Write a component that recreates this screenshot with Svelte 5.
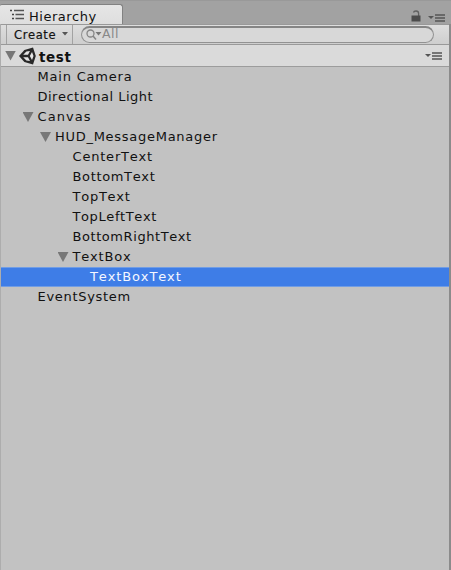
<script>
  const rows = [
    { name: 'Main Camera', depth: 0, ls: 0.8 },
    { name: 'Directional Light', depth: 0, ls: 0.5 },
    { name: 'Canvas', depth: 0, open: true, ls: 1.05 },
    { name: 'HUD_MessageManager', depth: 1, open: true, ls: 0.72 },
    { name: 'CenterText', depth: 2, ls: 0.8 },
    { name: 'BottomText', depth: 2, ls: 0.65 },
    { name: 'TopText', depth: 2, ls: 0.75 },
    { name: 'TopLeftText', depth: 2, ls: 0.6 },
    { name: 'BottomRightText', depth: 2, ls: 0.57 },
    { name: 'TextBox', depth: 2, open: true, ls: 0.8 },
    { name: 'TextBoxText', depth: 3, selected: true, ls: 0.87 },
    { name: 'EventSystem', depth: 0, ls: 0.7 }
  ];
</script>

{#snippet menuIcon()}
  <svg class="menu" width="18" height="8" viewBox="0 0 18 8">
    <path d="M0 2h6L3 5z" fill="#555" />
    <path d="M7 1h10M7 4h10M7 7h10" stroke="#555" stroke-width="1.5" />
  </svg>
{/snippet}

<div class="panel">
  <header>
    <div class="tab">
      <svg width="15" height="12" viewBox="0 0 15 12">
        <path d="M0 1.5h2M2 5.5h2M2 9.5h2" stroke="#444" stroke-width="1.7" />
        <path d="M4 1.5h10M5.5 5.5H14M5.5 9.5H14" stroke="#555" stroke-width="1.5" />
      </svg>
      <span>Hierarchy</span>
    </div>
    <div class="actions">
      <svg width="10" height="12" viewBox="0 0 10 12">
        <path d="M2.5 2.5Q2.8 1 5 1q2.6 0 2.6 2.5V6" fill="none" stroke="#606060" stroke-width="1.3" />
        <rect x="0.5" y="5.5" width="9" height="6" fill="#4c4c4c" />
      </svg>
      {@render menuIcon()}
    </div>
  </header>
  <div class="toolbar">
    <div class="create"><span>Create</span>
      <svg width="6" height="4" viewBox="0 0 6 4"><path d="M0 0h6L3 3.5z" fill="#555" /></svg>
    </div>
    <div class="search">
      <svg width="16" height="12" viewBox="0 0 16 12">
        <circle cx="4.5" cy="4.5" r="3.5" fill="none" stroke="#858585" stroke-width="1.3" />
        <path d="M7 7l3 3.5" stroke="#858585" stroke-width="1.5" />
        <path d="M9.5 3h6l-3 3.5z" fill="#777" />
      </svg>
      <span>All</span>
    </div>
  </div>
  <div class="scene">
    <i class="arrow"></i>
    <svg class="logo" width="18" height="18" viewBox="0 0 18 18">
      <path d="M0 9L5.4 3 14 .5 16.8 9 14 17.5 5.4 15z" fill="#292929" />
      <path d="M4.2 7.8L7.4 4.6l3.6-.7-2 3.9zM4.2 10.2H9l2 3.9-3.6-.7zM10.8 9l2.2-4.1L14.5 9 13 13.1z" fill="#e5e5e5" />
    </svg>
    <b>test</b>
    {@render menuIcon()}
  </div>
  <div class="tree">
    {#each rows as row}
      <div class="row" class:selected={row.selected} style="padding-left: {21.5 + row.depth * 17.5}px">
        <span class="fold">{#if row.open}<i class="arrow"></i>{/if}</span>
        <span style="letter-spacing: {row.ls}px">{row.name}</span>
      </div>
    {/each}
  </div>
</div>

<style>
  .panel {
    box-sizing: border-box;
    width: 451px;
    height: 570px;
    display: flex;
    flex-direction: column;
    background: #c2c2c2;
    border-left: 1px solid #adadad;
    border-right: 2px solid #8b8b8b;
    font: 13px/20px 'DejaVu Sans', sans-serif;
    font-kerning: none;
    color: #111;
  }
  svg { display: block; flex: none; }
  span, b { white-space: pre; }
  header {
    height: 24px;
    flex: none;
    display: flex;
    justify-content: space-between;
    align-items: flex-end;
    background: #a2a2a2;
    margin: 0 -2px 0 -1px;
    box-shadow: inset 0 1px #999;
  }
  .tab {
    box-sizing: border-box;
    width: 123px;
    height: 20px;
    display: flex;
    align-items: center;
    gap: 4px;
    padding-left: 10px;
    background: linear-gradient(#e6e6e6, #dedede);
    border: 1px solid #828282;
    border-bottom: 0;
    border-left: 0;
    border-radius: 2px 3px 0 0;
    font-size: 13px;
    letter-spacing: 0.5px;
  }
  .tab span { margin-top: 4px; }
  .actions { display: flex; align-items: flex-end; gap: 7px; padding: 0 5px 2px 0; }
  .toolbar {
    box-sizing: border-box;
    height: 21px;
    flex: none;
    display: flex;
    padding-left: 5px;
    background: linear-gradient(#dedede, #cecece);
    border-top: 1px solid #999;
    border-bottom: 1px solid #999;
  }
  .create {
    box-sizing: border-box;
    width: 67px;
    display: flex;
    align-items: center;
    justify-content: space-between;
    padding: 0 4px 0 7px;
    border-left: 1px solid #a2a2a2;
    border-right: 1px solid #a2a2a2;
    font-size: 11.5px;
    letter-spacing: 0.6px;
    -webkit-text-stroke: 0.2px #1a1a1a;
  }
  .create span { margin-top: 1px; }
  .create svg { margin-top: -1px; }
  .search {
    box-sizing: border-box;
    width: 353px;
    height: 17px;
    margin: 1px 0 0 8px;
    display: flex;
    align-items: center;
    padding-left: 4px;
    border: 1px solid #929292;
    border-top: 2px solid #858585;
    border-radius: 9px;
    background: #d8d8d8;
    color: #888;
    font-size: 12.5px;
    letter-spacing: 0.5px;
  }
  .search span { margin-top: -2px; }
  .scene {
    box-sizing: border-box;
    height: 22px;
    flex: none;
    display: flex;
    align-items: center;
    padding: 0 6px 0 4px;
    background: #dadada;
    border-bottom: 1px solid #9c9c9c;
  }
  .scene b { flex: 1; margin: 2px 0 0 2px; font-size: 13.5px; letter-spacing: 0.6px; }
  .scene .logo { margin-left: 3px; }
  .arrow {
    display: block;
    width: 11px;
    height: 10px;
    background: #777;
    clip-path: polygon(0 0, 100% 0, 50% 100%);
  }
  .row {
    height: 20px;
    display: flex;
    align-items: center;
  }
  .row .fold { width: 15px; flex: none; }
  .selected {
    background: #3e7de7;
    color: #f4f7ff;
    box-shadow: inset 0 1px #719de4, inset 0 -1px #719de4;
  }
</style>
